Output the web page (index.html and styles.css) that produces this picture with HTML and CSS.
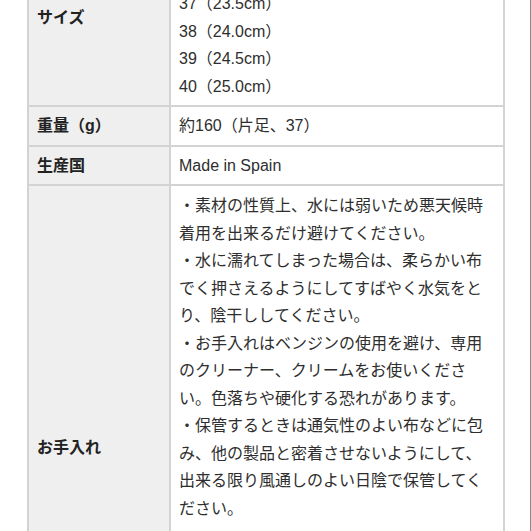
FILE: index.html
```html
<!DOCTYPE html>
<html lang="ja">
<head>
<meta charset="utf-8">
<title>商品詳細</title>
<link rel="stylesheet" href="styles.css">
</head>
<body>
<div class="page">
  <table class="spec">
    <tbody>
      <tr>
        <th class="label">サイズ</th>
        <td class="value">
          <div>35（22.5cm）</div>
          <div>36（23.0cm）</div>
          <div>37（23.5cm）</div>
          <div>38（24.0cm）</div>
          <div>39（24.5cm）</div>
          <div>40（25.0cm）</div>
        </td>
      </tr>
      <tr>
        <th class="label">重量（g）</th>
        <td class="value">約160（片足、37）</td>
      </tr>
      <tr>
        <th class="label">生産国</th>
        <td class="value">Made in Spain</td>
      </tr>
      <tr>
        <th class="label">お手入れ</th>
        <td class="value value-long">
          <div>・素材の性質上、水には弱いため悪天候時着用を出来るだけ避けてください。</div>
          <div>・水に濡れてしまった場合は、柔らかい布でく押さえるようにしてすばやく水気をとり、陰干ししてください。</div>
          <div>・お手入れはベンジンの使用を避け、専用のクリーナー、クリームをお使いください。色落ちや硬化する恐れがあります。</div>
          <div>・保管するときは通気性のよい布などに包み、他の製品と密着させないようにして、出来る限り風通しのよい日陰で保管してください。</div>
        </td>
      </tr>
    </tbody>
  </table>
</div>
</body>
</html>
```
FILE: styles.css
```css
* { box-sizing: border-box; }
html, body {
  margin: 0;
  padding: 0;
  background: #ffffff;
}
body {
  font-family: "Liberation Sans", "Noto Sans CJK JP", sans-serif;
  font-size: 16px;
  color: #333333;
  overflow: hidden;
}
.page {
  width: 531px;
  height: 531px;
  overflow: hidden;
  border-right: 1px solid #8a8a8a;
  padding-left: 27px;
}
.spec {
  margin-top: -72px;
  border-collapse: collapse;
  width: 478px;
  table-layout: fixed;
}
.spec th,
.spec td {
  border: 2px solid #d3d3d3;
  padding: 5px 8px;
  line-height: 27.5px;
  vertical-align: middle;
  text-align: left;
}
.spec .label {
  width: 142px;
  background: #efefef;
  font-weight: 700;
  color: #222222;
  padding-left: 8px;
}
.spec .value {
  background: #ffffff;
  color: #2e2e2e;
  font-weight: 400;
}
.spec .value-long {
  vertical-align: top;
  padding-top: 6px;
  padding-bottom: 188px;
  line-break: strict;
}
```
